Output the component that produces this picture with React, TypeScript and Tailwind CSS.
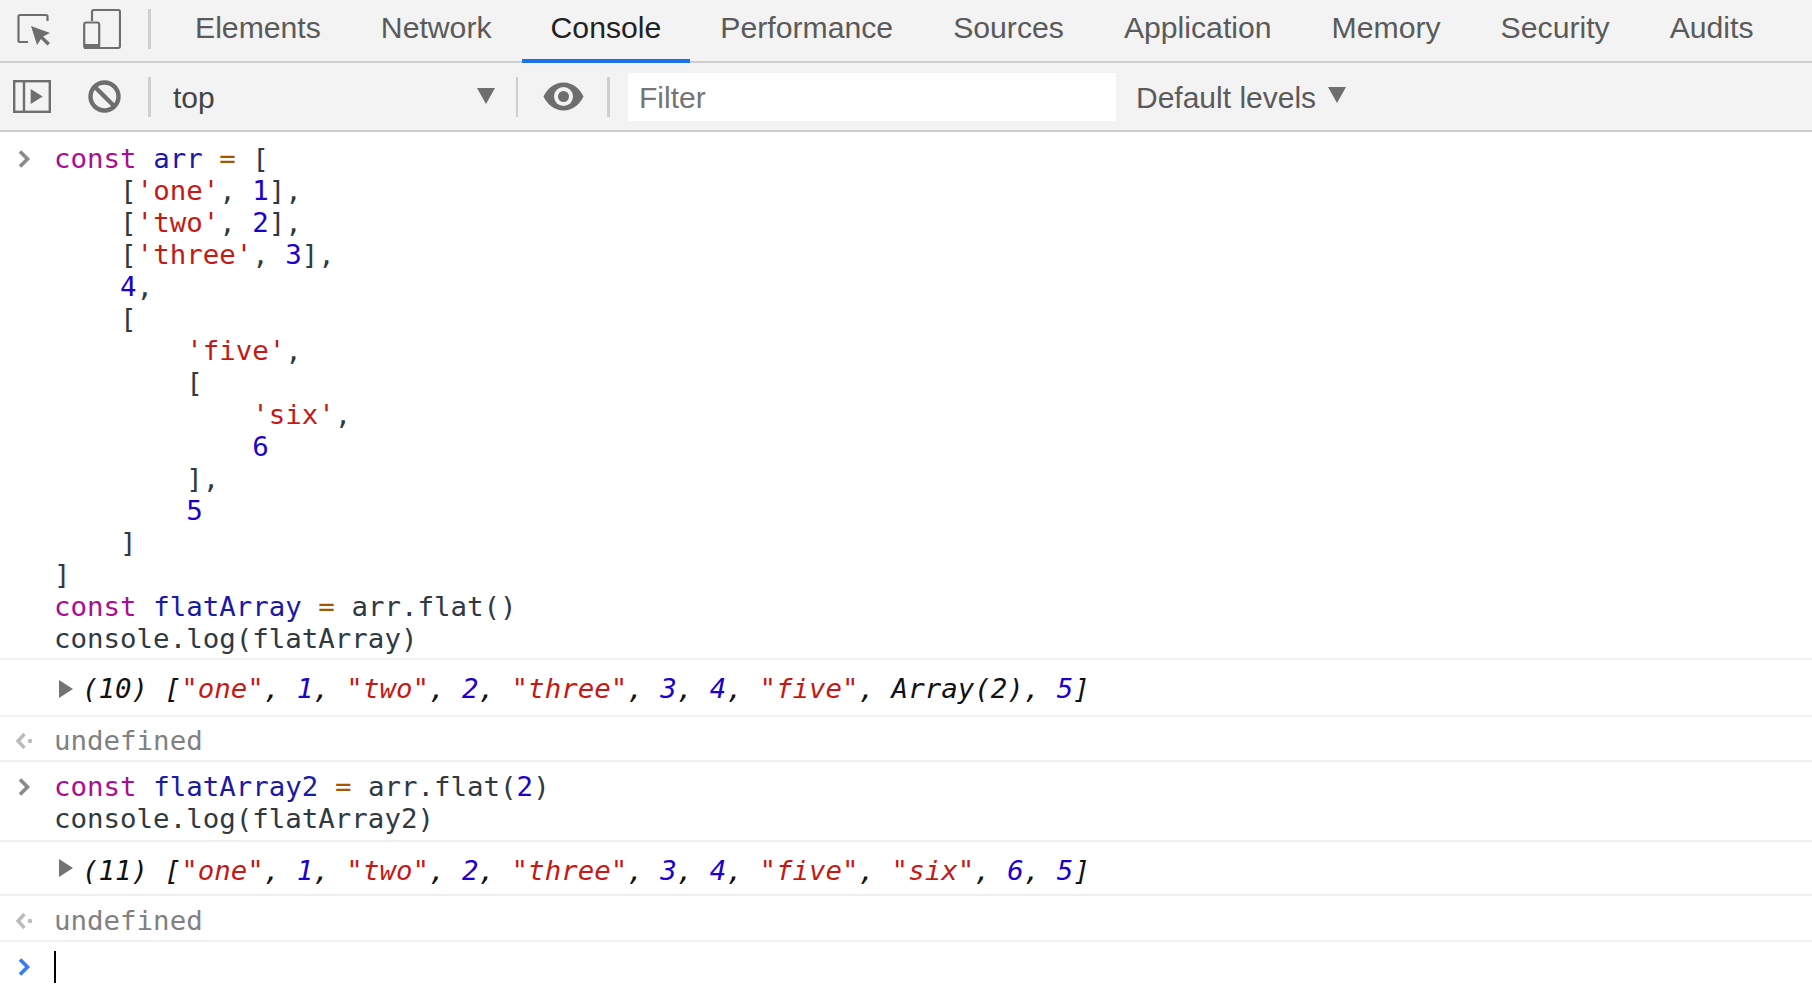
import React from "react";

const K = ({ children }: { children: React.ReactNode }) => <span className="text-[#aa0d91]">{children}</span>;
const V = ({ children }: { children: React.ReactNode }) => <span className="text-[#1a1aa6]">{children}</span>;
const O = ({ children }: { children: React.ReactNode }) => <span className="text-[#a85500]">{children}</span>;
const S = ({ children }: { children: React.ReactNode }) => <span className="text-[#c41a16]">{children}</span>;
const N = ({ children }: { children: React.ReactNode }) => <span className="text-[#1c00cf]">{children}</span>;

const tabs = ["Elements", "Network", "Console", "Performance", "Sources", "Application", "Memory", "Security", "Audits"];

const Divider = () => <div className="w-[3px] h-10 shrink-0 bg-[#cfcfcf]" />;

const PromptIcon = ({ color = "#8a8a8a" }: { color?: string }) => (
  <svg width="14" height="20" viewBox="0 0 14 20" fill="none">
    <path d="M3 2.5l7.5 7.5-7.5 7.5" stroke={color} strokeWidth="3.6" />
  </svg>
);

const ReturnIcon = () => (
  <svg width="18" height="20" viewBox="0 0 18 20" fill="none" className="-ml-[2px]">
    <path d="M9.5 3L3 10l6.5 7" stroke="#bbbbbb" strokeWidth="3.4" />
    <circle cx="15" cy="10" r="2.2" fill="#bbbbbb" />
  </svg>
);

const Caret = ({ className }: { className?: string }) => (
  <svg width="16" height="20" viewBox="0 0 16 20" className={className}>
    <path d="M1 1l14 9-14 9z" fill="#737373" />
  </svg>
);

const Row = ({ left, children, className }: { left?: React.ReactNode; children: React.ReactNode; className: string }) => (
  <div className={`flex border-b-2 border-[#f0f0f0] ${className}`}>
    <div className="w-[54px] shrink-0 pl-[17px] flex items-start">{left}</div>
    <div className="whitespace-pre">{children}</div>
  </div>
);

const Output = ({ head, children }: { head: string; children: React.ReactNode }) => (
  <div className="italic text-[#111]">
    {head} [<S>"one"</S>, <N>1</N>, <S>"two"</S>, <N>2</N>, <S>"three"</S>, <N>3</N>, <N>4</N>, <S>"five"</S>, {children}, <N>5</N>]
  </div>
);

export default function App() {
  return (
    <div className="w-[1812px] h-[994px] overflow-hidden bg-white font-['Liberation_Sans',sans-serif]">
      <div className="h-[63px] flex bg-[#f3f3f3] border-b-2 border-[#cdcdcd]">
        <div className="flex items-center w-[165px] shrink-0 pl-[17px] pb-[4px]">
          <svg width="36" height="36" viewBox="0 0 36 36" fill="none" className="mr-[30px] mt-[4px]">
            <path d="M11 29H3a1.5 1.5 0 0 1-1.5-1.5v-24A1.5 1.5 0 0 1 3 2h26a1.5 1.5 0 0 1 1.5 1.5V8" stroke="#6e6e6e" strokeWidth="2.2" />
            <path d="M14 13l19 7-7 3.5 7 6.5-2.5 2.5-6.5-6.5-4 6z" fill="#6e6e6e" />
          </svg>
          <svg width="38" height="40" viewBox="0 0 38 40" fill="none" className="mr-[27px]">
            <path d="M9 12V3a2 2 0 0 1 2-2h24a2 2 0 0 1 2 2v34a2 2 0 0 1-2 2H17" stroke="#6e6e6e" strokeWidth="2.2" />
            <rect x="1.2" y="13.5" width="15" height="25.5" rx="2" stroke="#6e6e6e" strokeWidth="2.2" />
            <rect x="1" y="35" width="16" height="5" fill="#6e6e6e" />
          </svg>
          <Divider />
        </div>
        <div className="flex text-[30.2px]">
          {tabs.map((t) => (
            <div
              key={t}
              className={
                t === "Console"
                  ? "px-[29px] h-[63px] flex items-center pb-[3px] text-[#222] border-b-[4px] border-[#1a73e8]"
                  : "px-[30px] h-[61px] flex items-center pb-[6px] text-[#5a5a5a]"
              }
            >
              {t}
            </div>
          ))}
        </div>
      </div>
      <div className="h-[69px] flex items-center bg-[#f3f3f3] border-b-2 border-[#cdcdcd] text-[30px]">
        <svg width="38" height="33" viewBox="0 0 38 33" fill="none" className="ml-[13px]">
          <rect x="1.2" y="1.2" width="35.6" height="30.6" stroke="#6e6e6e" strokeWidth="2.4" />
          <path d="M11 2v29" stroke="#6e6e6e" strokeWidth="2.4" />
          <path d="M17.7 9l12 7.5-12 7.5z" fill="#6e6e6e" />
        </svg>
        <svg width="33" height="33" viewBox="0 0 33 33" fill="none" className="ml-[37px] mr-[27px]">
          <circle cx="16.5" cy="16.5" r="14" stroke="#6e6e6e" strokeWidth="4.4" />
          <path d="M7 7l19 19" stroke="#6e6e6e" strokeWidth="4.4" />
        </svg>
        <Divider />
        <div className="w-[365px] pl-[22px] pr-[21px] pt-[2px] flex items-center justify-between text-[#444]">
          <span>top</span>
          <svg width="18" height="16" viewBox="0 0 18 16" className="mb-[3px]">
            <path d="M0 0h18L9 16z" fill="#6e6e6e" />
          </svg>
        </div>
        <div className="w-[2px] h-10 shrink-0 bg-[#cfcfcf]" />
        <svg width="41" height="29" viewBox="0 0 41 29" className="ml-[25px] mr-[23px] mb-[1px]">
          <path d="M20.5 0.5C11 0.5 4 7 0.5 14.5 4 22 11 28.5 20.5 28.5S37 22 40.5 14.5C37 7 30 0.5 20.5 0.5z" fill="#6e6e6e" />
          <circle cx="20.5" cy="14.5" r="9.5" fill="#f3f3f3" />
          <circle cx="20.5" cy="14.5" r="5.5" fill="#6e6e6e" />
        </svg>
        <Divider />
        <div className="ml-[18px] w-[488px] h-[48px] bg-white flex items-center pl-[11px] pt-[2px] text-[#757575]">Filter</div>
        <div className="ml-[20px] pt-[2px] text-[#5a5a5a]">Default levels</div>
        <svg width="18" height="16" viewBox="0 0 18 16" className="ml-[12px] mb-[3px]">
          <path d="M0 0h18L9 16z" fill="#6e6e6e" />
        </svg>
      </div>
      <div className="font-['DejaVu_Sans_Mono',monospace] text-[27.45px] leading-[32px] text-[#303942]">
        <Row className="h-[528px] pt-[11px]" left={<div className="pt-[6px]"><PromptIcon /></div>}>
          <div><K>const</K> <V>arr</V> <O>=</O> {"["}</div>
          <div>{"    ["}<S>'one'</S>, <N>1</N>],</div>
          <div>{"    ["}<S>'two'</S>, <N>2</N>],</div>
          <div>{"    ["}<S>'three'</S>, <N>3</N>],</div>
          <div>{"    "}<N>4</N>,</div>
          <div>{"    ["}</div>
          <div>{"        "}<S>'five'</S>,</div>
          <div>{"        ["}</div>
          <div>{"            "}<S>'six'</S>,</div>
          <div>{"            "}<N>6</N></div>
          <div>{"        ],"}</div>
          <div>{"        "}<N>5</N></div>
          <div>{"    ]"}</div>
          <div>]</div>
          <div><K>const</K> <V>flatArray</V> <O>=</O> arr.flat()</div>
          <div>console.log(flatArray)</div>
        </Row>
        <Row className="h-[57px] pt-[13px]" left={<Caret className="ml-[41px] -mr-[41px] mt-[6px]" />}>
          <div className="ml-[28px]"><Output head="(10)">Array(2)</Output></div>
        </Row>
        <Row className="h-[45px] pt-[8px]" left={<div className="pt-[6px]"><ReturnIcon /></div>}>
          <div className="text-[#808080]">undefined</div>
        </Row>
        <Row className="h-[80px] pt-[9px]" left={<div className="pt-[6px]"><PromptIcon /></div>}>
          <div><K>const</K> <V>flatArray2</V> <O>=</O> arr.flat(<N>2</N>)</div>
          <div>console.log(flatArray2)</div>
        </Row>
        <Row className="h-[54px] pt-[13px]" left={<Caret className="ml-[41px] -mr-[41px] mt-[3px]" />}>
          <div className="ml-[28px]"><Output head="(11)"><S>"six"</S>, <N>6</N></Output></div>
        </Row>
        <Row className="h-[46px] pt-[9px]" left={<div className="pt-[6px]"><ReturnIcon /></div>}>
          <div className="text-[#808080]">undefined</div>
        </Row>
        <div className="flex pt-[9px]">
          <div className="w-[54px] shrink-0 pl-[17px] pt-[6px]"><PromptIcon color="#367cf1" /></div>
          <div className="w-[2px] h-[32px] bg-black" />
        </div>
      </div>
    </div>
  );
}
